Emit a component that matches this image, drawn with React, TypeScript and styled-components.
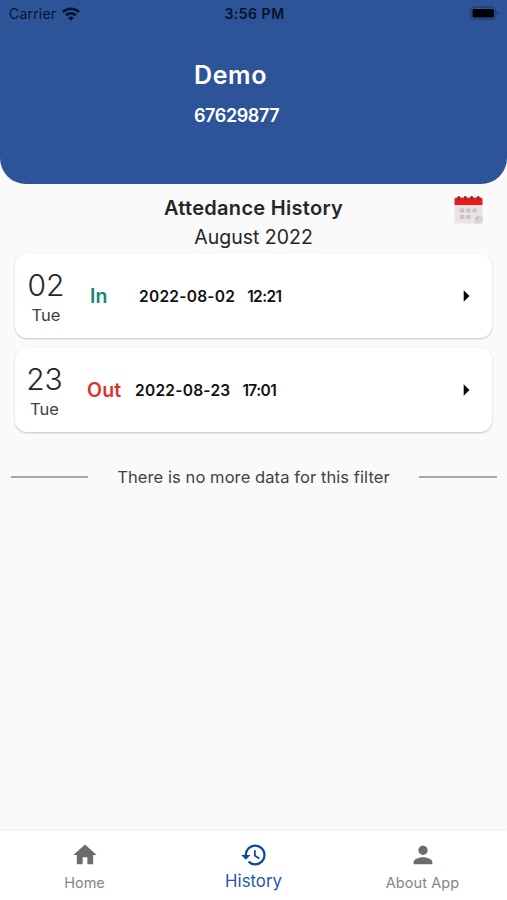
import React from "react";
import styled, { createGlobalStyle } from "styled-components";
import { MdArrowRight, MdHistory, MdHome, MdPerson } from "react-icons/md";

const GlobalStyle = createGlobalStyle`
  * { box-sizing: border-box; }
  body { margin: 0; background: #fafafa; }
`;

const Screen = styled.div`
  width: 507px;
  height: 900px;
  display: flex;
  flex-direction: column;
  overflow: hidden;
  background: #fafafa;
  color: #252628;
  font-family: Inter, "Liberation Sans", sans-serif;
`;

const Header = styled.header`
  height: 184px;
  flex: none;
  background: #2d5499;
  border-radius: 0 0 26px 26px;
`;

const StatusBar = styled.div`
  height: 27px;
  padding: 0 7px 0 9px;
  display: grid;
  grid-template-columns: 1fr auto 1fr;
  align-items: center;
  color: #071328;
  font-size: 14px;
  line-height: 27px;
`;

const Carrier = styled.div`
  display: flex;
  align-items: center;
  gap: 6px;
  letter-spacing: 0.2px;
`;

const Clock = styled.div`
  font-weight: 600;
  letter-spacing: 0.5px;
`;

const BatterySlot = styled.div`
  display: flex;
  justify-content: flex-end;
`;

const Profile = styled.div`
  padding: 32px 0 0 194px;
  color: #fff;
`;

const Label = styled.div<{
  $size: number;
  $line: number;
  $weight?: number;
  $spacing?: number;
  $color?: string;
}>`
  font-size: ${(p) => p.$size}px;
  line-height: ${(p) => p.$line}px;
  font-weight: ${(p) => p.$weight ?? 400};
  letter-spacing: ${(p) => p.$spacing ?? 0}px;
  color: ${(p) => p.$color ?? "inherit"};
  white-space: pre;
`;

const TitleRow = styled.div`
  height: 70px;
  flex: none;
  padding: 10px 22px 0;
  display: grid;
  grid-template-columns: 32px 1fr 32px;
`;

const Titles = styled.div`
  display: flex;
  flex-direction: column;
  align-items: center;
`;

const CalendarButton = styled.div`
  padding-top: 1px;
`;

const List = styled.div`
  padding: 0 15px;
  display: flex;
  flex-direction: column;
  gap: 10px;
`;

const Card = styled.article`
  height: 84px;
  padding: 0 12px 0 7px;
  display: grid;
  grid-template-columns: 48px 64px 1fr 28px;
  align-items: center;
  background: #fff;
  border-radius: 12px;
  box-shadow: 0 1px 2px rgba(0, 0, 0, 0.22);
`;

const Day = styled.div<{ $shift: number }>`
  padding: 3px ${(p) => p.$shift}px 0 0;
  display: flex;
  flex-direction: column;
  align-items: center;
`;

const Status = styled.div<{ $color: string; $inset: number }>`
  padding-left: ${(p) => p.$inset}px;
  color: ${(p) => p.$color};
  font-size: 19.5px;
  line-height: 24px;
  font-weight: 600;
  letter-spacing: 0.2px;
`;

const Stamp = styled.div<{ $inset: number }>`
  display: flex;
  gap: 12px;
  padding: 2px 0 0 ${(p) => p.$inset}px;
  color: #111;
  font-size: 15.5px;
  line-height: 20px;
  font-weight: 600;
`;

const DateText = styled.span`
  letter-spacing: 0.25px;
`;

const TimeText = styled.span`
  letter-spacing: -0.6px;
`;

const Footnote = styled.div`
  height: 24px;
  margin: 33px 10px 0 11px;
  display: grid;
  grid-template-columns: 77px 1fr 78px;
  align-items: center;
  justify-items: center;
`;

const Rule = styled.span`
  width: 100%;
  height: 2px;
  background: #9eacae;
`;

const TabBar = styled.nav`
  height: 69px;
  flex: none;
  margin-top: auto;
  display: grid;
  grid-template-columns: repeat(3, 1fr);
  background: #fff;
  box-shadow: 0 -2px 2px rgba(0, 0, 0, 0.025);
`;

const Tab = styled.div<{ $active?: boolean }>`
  padding-top: 10px;
  display: flex;
  flex-direction: column;
  align-items: center;
  color: ${(p) => (p.$active ? "#0c47a1" : "#6c6c6c")};
`;

const WifiIcon = () => (
  <svg width="18" height="14" viewBox="0 0 18 14">
    <g fill="none" stroke="currentColor" strokeWidth="2.7">
      <path d="M1 5a11.5 11.5 0 0 1 16 0" />
      <path d="M4 8.4a7.2 7.2 0 0 1 10 0" />
    </g>
    <path d="M9 13.8 6.2 10.9a4 4 0 0 1 5.6 0z" fill="currentColor" />
  </svg>
);

const BatteryIcon = () => (
  <svg width="30" height="15" viewBox="0 0 30 15">
    <rect x="0.7" y="1.2" width="25" height="12.2" rx="3.8" fill="none" stroke="#1f3d73" strokeWidth="1.2" />
    <rect x="2.5" y="3" width="21.5" height="8.6" rx="1.4" fill="#000103" />
    <path d="M27.3 5.5v3.6q1.6-.5 1.6-1.8t-1.6-1.8" fill="#1f3d73" />
  </svg>
);

const CalendarIcon = () => (
  <svg width="31" height="30" viewBox="0 0 31 30">
    <path d="M1.5 8h28v18.5q0 2-2 2h-24q-2 0-2-2z" fill="#e9e3e3" />
    <path d="M20.5 28.5 29.5 20v6.5q0 2-2 2z" fill="#dbd3d3" />
    <path d="M1.5 10V4.5q0-2 2-2h24q2 0 2 2V10z" fill="#ed1c1c" />
    <g fill="#6c3638">
      <rect x="4.5" y="1" width="2.5" height="4" rx="1" />
      <rect x="11" y="1" width="2.5" height="4" rx="1" />
      <rect x="17.5" y="1" width="2.5" height="4" rx="1" />
      <rect x="24" y="1" width="2.5" height="4" rx="1" />
    </g>
    <g fill="#cbc1c1">
      <rect x="7" y="13.5" width="4.3" height="4" rx="1" />
      <rect x="13.2" y="13.5" width="4.3" height="4" rx="1" />
      <rect x="19.4" y="13.5" width="4.3" height="4" rx="1" />
      <rect x="7" y="20" width="4.3" height="4" rx="1" />
      <rect x="13.2" y="20" width="4.3" height="4" rx="1" />
    </g>
    <path d="m21.5 26 1-4 5-1.2-2.5 3.5z" fill="#c9bcbc" />
  </svg>
);

const records = [
  { day: "02", name: "Tue", status: "In", color: "#168573", date: "2022-08-02", time: "12:21", shift: 0, statusInset: 20, inset: 5 },
  { day: "23", name: "Tue", status: "Out", color: "#df3030", date: "2022-08-23", time: "17:01", shift: 3, statusInset: 17, inset: 1 },
];

export default function App() {
  return (
    <>
      <GlobalStyle />
      <Screen>
        <Header>
          <StatusBar>
            <Carrier>Carrier <WifiIcon /></Carrier>
            <Clock>3:56 PM</Clock>
            <BatterySlot><BatteryIcon /></BatterySlot>
          </StatusBar>
          <Profile>
            <Label $size={25} $line={32} $weight={600} $spacing={0.6}>Demo</Label>
            <Label $size={18} $line={49} $weight={600} $spacing={-0.4}>67629877</Label>
          </Profile>
        </Header>
        <TitleRow>
          <span />
          <Titles>
            <Label $size={20} $line={29} $weight={600} $spacing={0.3}>Attedance History</Label>
            <Label $size={19.5} $line={29} $spacing={0}>August 2022</Label>
          </Titles>
          <CalendarButton><CalendarIcon /></CalendarButton>
        </TitleRow>
        <List>
          {records.map((r) => (
            <Card key={r.day}>
              <Day $shift={r.shift}>
                <Label $size={30} $line={34} $weight={300}>{r.day}</Label>
                <Label $size={16.5} $line={26} $color="#414143">{r.name}</Label>
              </Day>
              <Status $color={r.color} $inset={r.statusInset}>{r.status}</Status>
              <Stamp $inset={r.inset}>
                <DateText>{r.date}</DateText>
                <TimeText>{r.time}</TimeText>
              </Stamp>
              <MdArrowRight size={28} color="#080808" />
            </Card>
          ))}
        </List>
        <Footnote>
          <Rule />
          <Label $size={16.5} $line={24} $spacing={0.08} $color="#414244">There is no more data for this filter</Label>
          <Rule />
        </Footnote>
        <TabBar>
          <Tab>
            <MdHome size={28} />
            <Label $size={14.5} $line={28} $color="#858585">Home</Label>
          </Tab>
          <Tab $active>
            <MdHistory size={28} />
            <Label $size={16.8} $line={25} $color="#2856a8">History</Label>
          </Tab>
          <Tab>
            <MdPerson size={28} />
            <Label $size={14.5} $line={28} $spacing={0.1} $color="#858585">About App</Label>
          </Tab>
        </TabBar>
      </Screen>
    </>
  );
}
